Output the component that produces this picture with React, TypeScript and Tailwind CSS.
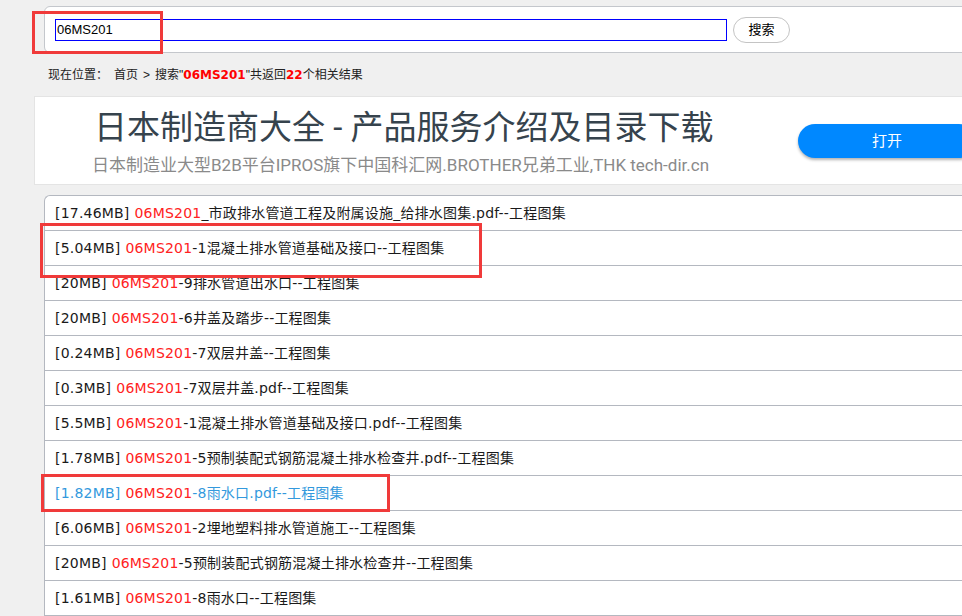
import React from "react";

const rows: { size: string; rest: string; hover?: boolean }[] = [
  { size: "[17.46MB]", rest: "_市政排水管道工程及附属设施_给排水图集.pdf--工程图集" },
  { size: "[5.04MB]", rest: "-1混凝土排水管道基础及接口--工程图集" },
  { size: "[20MB]", rest: "-9排水管道出水口--工程图集" },
  { size: "[20MB]", rest: "-6井盖及踏步--工程图集" },
  { size: "[0.24MB]", rest: "-7双层井盖--工程图集" },
  { size: "[0.3MB]", rest: "-7双层井盖.pdf--工程图集" },
  { size: "[5.5MB]", rest: "-1混凝土排水管道基础及接口.pdf--工程图集" },
  { size: "[1.78MB]", rest: "-5预制装配式钢筋混凝土排水检查井.pdf--工程图集" },
  { size: "[1.82MB]", rest: "-8雨水口.pdf--工程图集", hover: true },
  { size: "[6.06MB]", rest: "-2埋地塑料排水管道施工--工程图集" },
  { size: "[20MB]", rest: "-5预制装配式钢筋混凝土排水检查井--工程图集" },
  { size: "[1.61MB]", rest: "-8雨水口--工程图集" },
];

const listFont = {
  fontFamily: '"DejaVu Sans", "Noto Sans CJK SC", sans-serif',
};

export default function App() {
  return (
    <div
      className="relative w-[962px] h-[616px] overflow-hidden bg-[#f0f0f0]"
      style={{ fontFamily: '"Liberation Sans", "Noto Sans CJK SC", sans-serif' }}
    >
      <div className="w-[1000px] pt-[6px]">
        {/* search panel */}
        <div className="ml-[44px] h-[47px] bg-white border border-[#c4c7cc] rounded-l-[6px] flex items-center pl-[10px]">
          <div className="w-[672px] h-[22px] border border-[#0000ff] flex items-center pl-[1px] text-[13px] text-black">
            06MS201
          </div>
          <div className="ml-[6px] w-[57px] h-[26px] rounded-full border border-[#c4c4c4] bg-white flex items-center justify-center text-[13px] text-black">
            搜索
          </div>
        </div>

        {/* breadcrumb */}
        <div className="h-[43px] flex items-center pl-[48px] text-[12px] text-[#222]">
          <span>现在位置：</span>
          <span className="ml-[6px]">首页</span>
          <span className="mx-[5px]">&gt;</span>
          <span>搜索"</span>
          <span className="font-bold text-[#ff0000]" style={{ fontFamily: '"DejaVu Sans", sans-serif' }}>
            06MS201
          </span>
          <span>"共返回</span>
          <span className="font-bold text-[#ff0000]" style={{ fontFamily: '"DejaVu Sans", sans-serif' }}>
            22
          </span>
          <span>个相关结果</span>
        </div>

        {/* ad banner */}
        <div
          className="ml-[34px] h-[89px] bg-white border border-[#e4e4e4] flex items-start"
          style={{ fontFamily: 'Roboto, "Noto Sans CJK SC", sans-serif' }}
        >
          <div className="pl-[59px] pt-[13px] w-[763px] flex flex-col">
            <div className="text-[33px] leading-[36px] text-[#36434d] whitespace-nowrap">
              日本制造商大全 - 产品服务介绍及目录下载
            </div>
            <div className="text-[17px] leading-[22px] text-[#8a8a8a] whitespace-nowrap -ml-[2px] mt-[8px]">
              日本制造业大型B2B平台IPROS旗下中国科汇网.BROTHER兄弟工业,THK tech-dir.cn
            </div>
          </div>
          <div className="mt-[27px] w-[178px] h-[34px] rounded-full bg-[#0088ff] shadow-[0_2px_3px_rgba(0,0,0,0.3)] flex items-center justify-center text-white text-[15px]">
            打开
          </div>
        </div>

        {/* results list */}
        <div
          className="ml-[44px] mt-[10px] bg-white border-l border-t border-[#b4b8c0] rounded-tl-[6px]"
          style={listFont}
        >
          {rows.map((r, i) => (
            <div
              key={i}
              className={`h-[35px] border-b border-[#b4b8c0] flex items-center pl-[10px] text-[14px] tracking-[0.2px] whitespace-nowrap ${
                r.hover ? "text-[#3399dd]" : "text-[#1a1a1a]"
              }`}
            >
              <span>{r.size}</span>
              <span className="ml-[5px] text-[#ff2222]">06MS201</span>
              <span>{r.rest}</span>
            </div>
          ))}
        </div>
      </div>

      {/* red annotation boxes */}
      <div className="absolute left-[32px] top-[11px] w-[131px] h-[43px] border-[3px] border-[#f03a3a]" />
      <div className="absolute left-[40px] top-[223px] w-[442px] h-[55px] border-[3px] border-[#f03a3a]" />
      <div className="absolute left-[41px] top-[474px] w-[349px] h-[38px] border-[3px] border-[#f03a3a]" />
    </div>
  );
}
